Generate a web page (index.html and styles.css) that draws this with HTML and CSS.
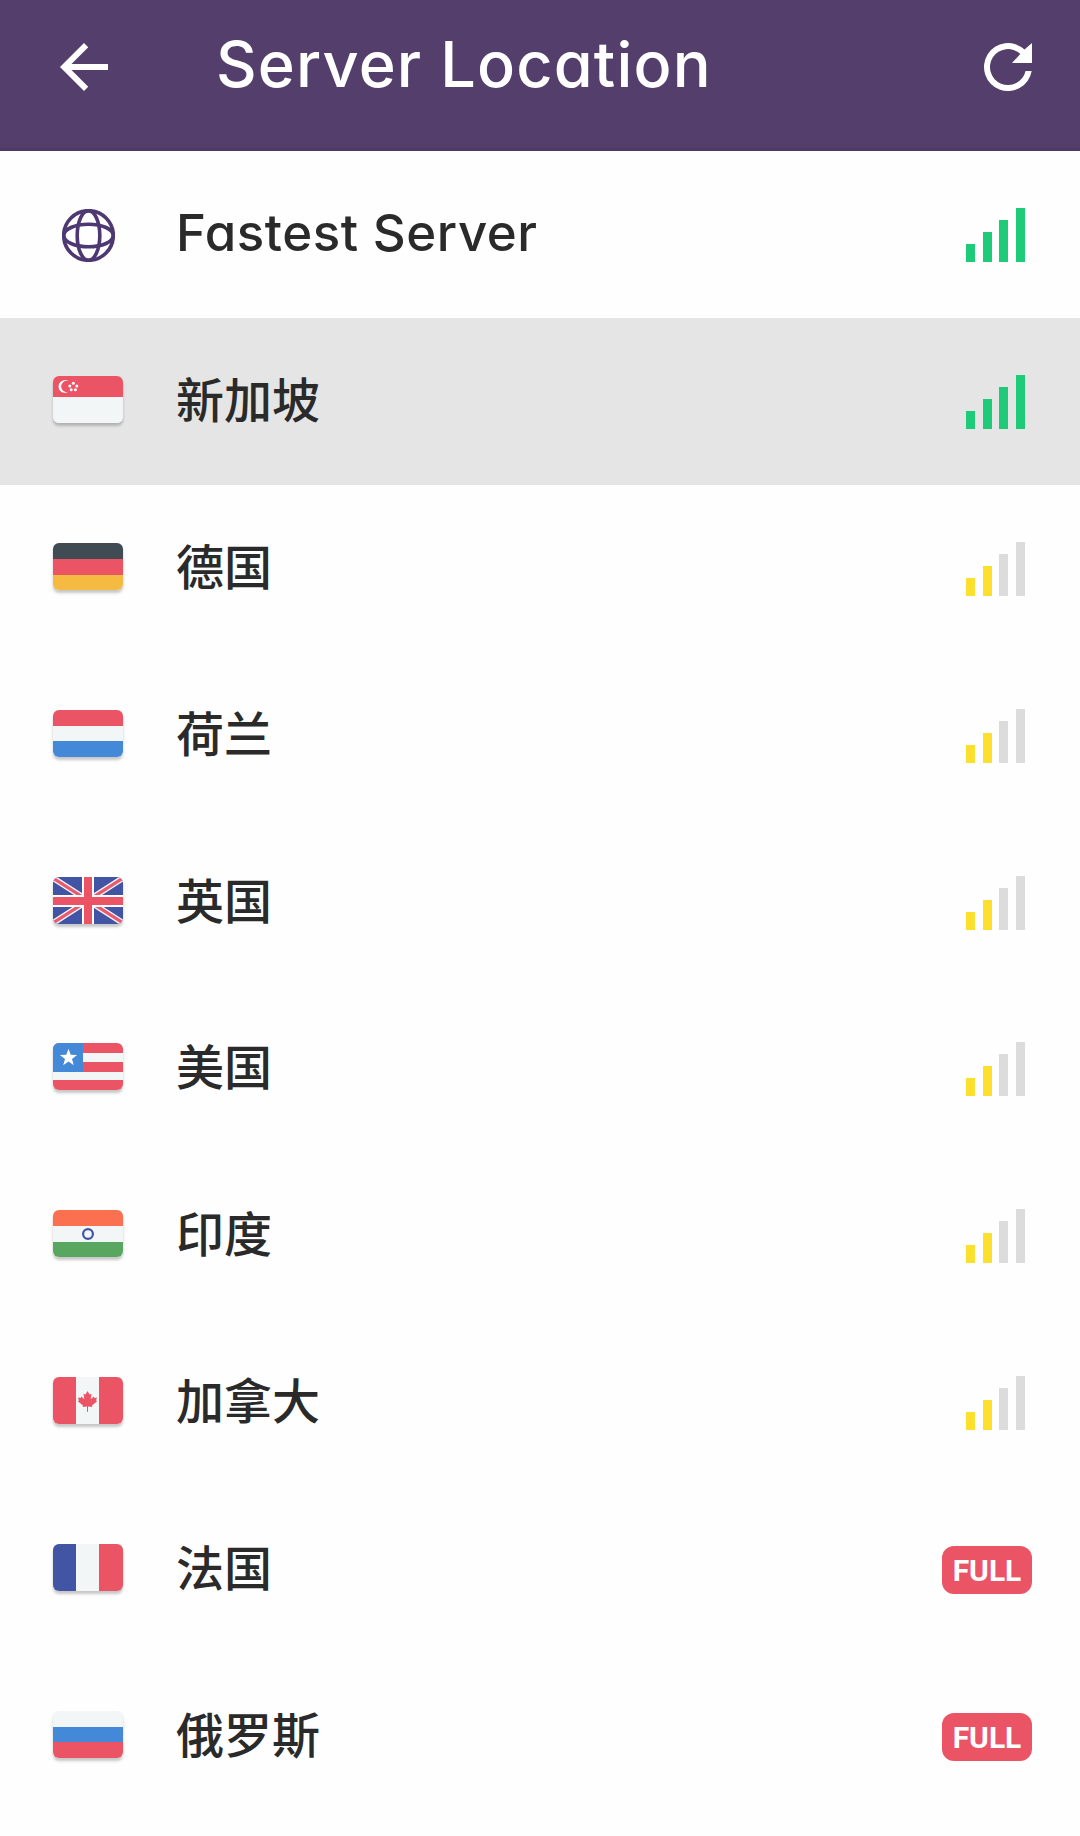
FILE: index.html
```
<!DOCTYPE html>
<html lang="zh">
<head>
  <meta charset="utf-8">
  <title>Server Location</title>
  <link rel="stylesheet" href="styles.css">
</head>
<body>

<header class="topbar">
  <svg class="icon" viewBox="0 0 24 24"><path d="M20 11H7.83l5.59-5.59L12 4l-8 8 8 8 1.41-1.41L7.83 13H20v-2z"/></svg>
  <h1>Server Location</h1>
  <svg class="icon" viewBox="0 0 24 24"><path d="M19.89 13.33A8 8 0 1 1 17.5 6.2L20 4v6.67h-6.67L16.1 7.65A6 6 0 1 0 17.85 13.33z"/></svg>
</header>

<ul class="servers">
  <li class="server">
    <svg class="globe" viewBox="0 0 53 53">
      <circle cx="26.5" cy="26.5" r="24.8"/>
      <ellipse cx="26.5" cy="26.5" rx="11.3" ry="24.8"/>
      <ellipse cx="26.5" cy="26.5" rx="24.8" ry="11.3"/>
    </svg>
    <span class="name latin">Fastest Server</span>
    <div class="signal good"><i></i><i></i><i></i><i></i></div>
  </li>

  <li class="server selected">
    <svg class="flag" viewBox="0 0 70 47">
      <rect width="70" height="47" fill="#f2f6f6"/>
      <rect width="70" height="21" fill="#eb5465"/>
      <path fill="#fff" d="M15.5 5.2A6.4 6.4 0 1 0 15.5 15.8A5.6 5.6 0 1 1 15.5 5.2z"/>
      <g fill="#fff">
        <circle cx="20.3" cy="7.2" r="1.5"/>
        <circle cx="16.8" cy="9.9" r="1.5"/>
        <circle cx="23.8" cy="9.9" r="1.5"/>
        <circle cx="18.2" cy="13.7" r="1.5"/>
        <circle cx="22.4" cy="13.7" r="1.5"/>
      </g>
    </svg>
    <span class="name">新加坡</span>
    <div class="signal good"><i></i><i></i><i></i><i></i></div>
  </li>

  <li class="server">
    <svg class="flag" viewBox="0 0 70 47">
      <rect width="70" height="16" fill="#404b53"/>
      <rect y="16" width="70" height="16" fill="#eb5465"/>
      <rect y="32" width="70" height="15" fill="#f4ba41"/>
    </svg>
    <span class="name">德国</span>
    <div class="signal weak"><i></i><i></i><i></i><i></i></div>
  </li>

  <li class="server">
    <svg class="flag" viewBox="0 0 70 47">
      <rect width="70" height="16" fill="#eb5465"/>
      <rect y="16" width="70" height="15" fill="#f2f6f6"/>
      <rect y="31" width="70" height="16" fill="#4488d8"/>
    </svg>
    <span class="name">荷兰</span>
    <div class="signal weak"><i></i><i></i><i></i><i></i></div>
  </li>

  <li class="server">
    <svg class="flag" viewBox="0 0 70 47">
      <rect width="70" height="47" fill="#4254a4"/>
      <path stroke="#f6f6fa" stroke-width="6" d="M0 1L70 46M70 1L0 46"/>
      <path stroke="#e85b6c" stroke-width="3.2" d="M0 1L70 46M70 1L0 46"/>
      <path fill="#fff" d="M29 0h12v18h29v12H41v17H29V30H0V18h29z"/>
      <path fill="#eb5465" d="M31 0h8v20h31v8H39v19h-8V28H0v-8h31z"/>
    </svg>
    <span class="name">英国</span>
    <div class="signal weak"><i></i><i></i><i></i><i></i></div>
  </li>

  <li class="server">
    <svg class="flag" viewBox="0 0 70 47">
      <rect width="70" height="47" fill="#eb5465"/>
      <rect y="10" width="70" height="9" fill="#f2f6f6"/>
      <rect y="29" width="70" height="8" fill="#f2f6f6"/>
      <rect width="30" height="29" fill="#4488d8"/>
      <path fill="#fff" d="M15.5 5.7l2.2 6.1 6.4.2-5.1 3.9 1.8 6.3-5.3-3.7-5.3 3.7 1.8-6.3L6.9 12l6.4-.2z"/>
    </svg>
    <span class="name">美国</span>
    <div class="signal weak"><i></i><i></i><i></i><i></i></div>
  </li>

  <li class="server">
    <svg class="flag" viewBox="0 0 70 47">
      <rect width="70" height="16" fill="#fa7050"/>
      <rect y="16" width="70" height="16" fill="#f2f6f6"/>
      <rect y="32" width="70" height="15" fill="#58a65f"/>
      <circle cx="35" cy="24" r="4.9" fill="none" stroke="#4254a4" stroke-width="2.2"/>
    </svg>
    <span class="name">印度</span>
    <div class="signal weak"><i></i><i></i><i></i><i></i></div>
  </li>

  <li class="server">
    <svg class="flag" viewBox="0 0 70 47">
      <rect width="70" height="47" fill="#eb5465"/>
      <rect x="23" width="23" height="47" fill="#f2f6f6"/>
      <path fill="#eb5465" d="M34.5 14l2 3.6 2-.8-.8 5.4 3-2.6.7 1.5 2.6-.5-.9 2.9 1.1.8-5.2 4.1.4 1.6-4.4-.6v5.4h-1v-5.4l-4.4.6.4-1.6-5.2-4.1 1.1-.8-.9-2.9 2.6.5.7-1.5 3 2.6-.8-5.4 2 .8z"/>
    </svg>
    <span class="name">加拿大</span>
    <div class="signal weak"><i></i><i></i><i></i><i></i></div>
  </li>

  <li class="server">
    <svg class="flag" viewBox="0 0 70 47">
      <rect width="23" height="47" fill="#4254a4"/>
      <rect x="23" width="23" height="47" fill="#f2f6f6"/>
      <rect x="46" width="24" height="47" fill="#eb5465"/>
    </svg>
    <span class="name">法国</span>
    <span class="full">FULL</span>
  </li>

  <li class="server">
    <svg class="flag" viewBox="0 0 70 47">
      <rect width="70" height="16" fill="#f2f6f6"/>
      <rect y="16" width="70" height="15" fill="#4488d8"/>
      <rect y="31" width="70" height="16" fill="#eb5465"/>
    </svg>
    <span class="name">俄罗斯</span>
    <span class="full">FULL</span>
  </li>
</ul>

</body>
</html>
```
FILE: styles.css
```
body {
  margin: 0;
  background-color: #fefefe;
  color: #2a2a2a;
  font-family: Inter, "Noto Sans CJK SC", sans-serif;
}
.topbar {
  display: flex;
  align-items: flex-start;
  box-sizing: border-box;
  height: 151px;
  padding: 31px 36px 0 48px;
  background-color: #543f6c;
  border-bottom: 3px solid #4e3a66;
}
.icon {
  width: 72px;
  height: 72px;
  fill: #fff;
}
h1 {
  flex: 1;
  margin: 0 0 0 96px;
  color: #fff;
  font-size: 63px;
  font-weight: 500;
  line-height: 66px;
  letter-spacing: 1.15px;
  font-feature-settings: "cv11";
}
.servers {
  margin: 0;
  padding: 0;
  list-style: none;
}
.server {
  display: flex;
  align-items: flex-start;
  box-sizing: border-box;
  height: 166.87px;
  padding: 57.1px 48px 0 53px;
}
.selected {
  background-color: #e5e5e5;
}
.globe {
  width: 53px;
  height: 53px;
  margin: 1px 8px 0 9px;
  fill: none;
  stroke: #4e3872;
  stroke-width: 3.6;
}
.flag {
  width: 70px;
  height: 47px;
  margin-top: 1px;
  border-radius: 6px;
  box-shadow: 0 3px 3px rgba(0, 0, 0, 0.22);
}
.name {
  flex: 1;
  margin-left: 53px;
  font-family: "Noto Sans CJK SC", sans-serif;
  font-size: 48px;
  font-weight: 500;
  line-height: 44px;
}
.latin {
  font-family: Inter, sans-serif;
  font-size: 51px;
  line-height: 50px;
  letter-spacing: 0.55px;
  font-feature-settings: "cv11";
}
/* four 9px bars spread over 59px */
.signal {
  display: grid;
  grid-template-columns: 9px 9px 9px 9px;
  column-gap: 7.67px;
  align-items: end;
  height: 54px;
  margin-right: 7px;
}
.signal i {
  height: 18px;
  background-color: #dcdcdc;
}
.signal i:nth-child(2) {
  height: 30px;
}
.signal i:nth-child(3) {
  height: 42px;
}
.signal i:nth-child(4) {
  height: 54px;
}
.good i {
  background-color: #1dcb78;
}
.weak i:nth-child(-n+2) {
  background-color: #fddf2d;
}
.full {
  width: 90px;
  height: 48px;
  margin-top: 3px;
  border-radius: 12px;
  background-color: #eb5465;
  color: #fff;
  font-family: Roboto, sans-serif;
  font-size: 30px;
  font-weight: 700;
  line-height: 49px;
  text-align: center;
}
```
